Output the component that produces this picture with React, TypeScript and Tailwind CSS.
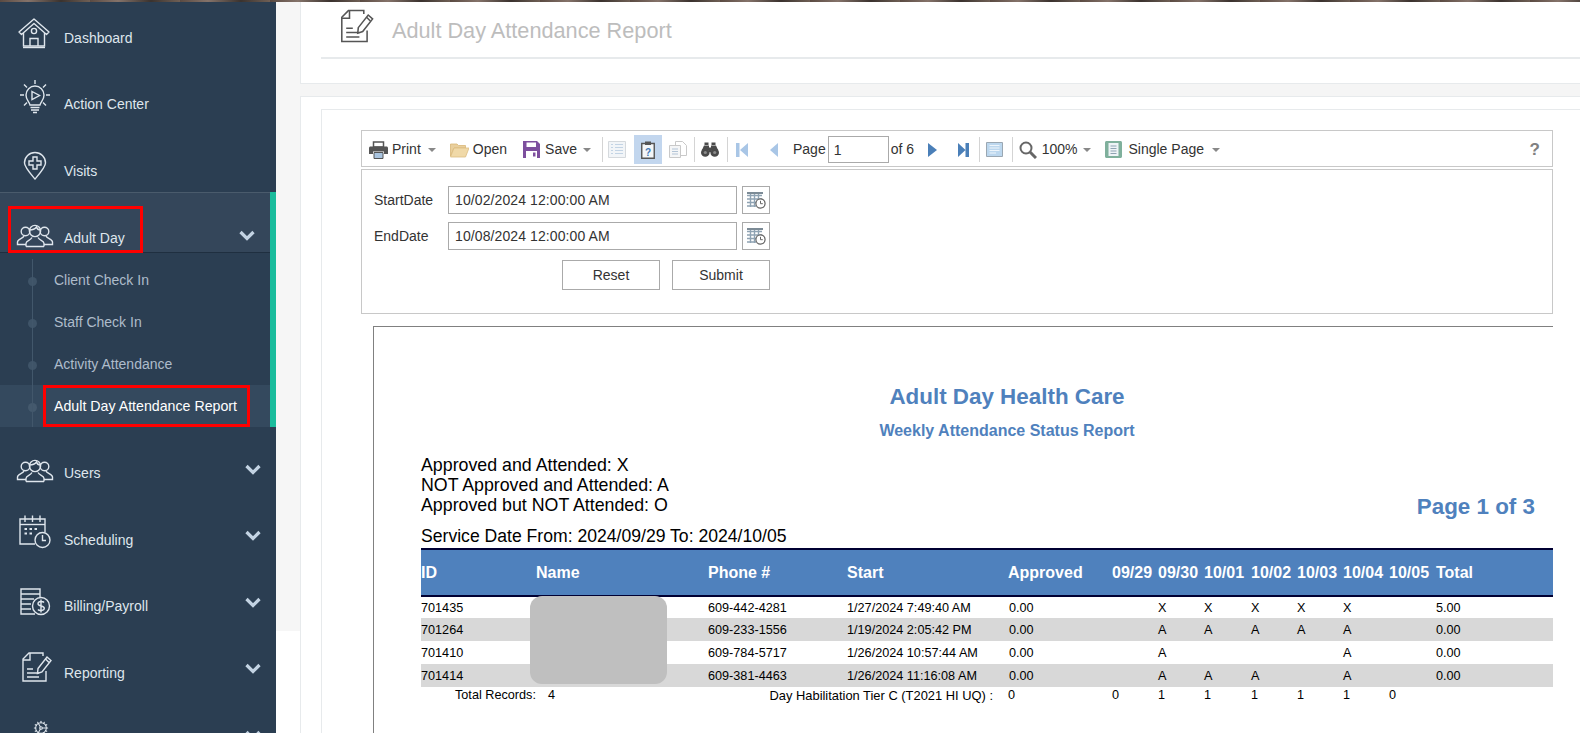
import { Cog } from "lucide-react";

type IconProps = { className?: string };

function HouseIcon({ className }: IconProps) {
  return (
    <svg viewBox="0 0 40 40" className={className} fill="none" stroke="currentColor" strokeWidth="1.4">
      <path d="M4 19 L19 6 L34 19 L31.5 21.5 L19 10.5 L6.5 21.5 Z" strokeLinejoin="round" />
      <path d="M8.5 20 V33 H29.5 V20" />
      <path d="M15 33 V25.5 H23 V33" />
      <circle cx="19" cy="18" r="2.6" />
      <path d="M8 34.5 H30" />
    </svg>
  );
}

function BulbIcon({ className }: IconProps) {
  return (
    <svg viewBox="0 0 40 40" className={className} fill="none" stroke="currentColor" strokeWidth="1.4">
      <path d="M15 28 C14 24 11 23 11 18 A9 9 0 0 1 29 18 C29 23 26 24 25 28 Z" />
      <path d="M17 14.5 L24.5 18.5 L17 22.5 Z" />
      <path d="M15.5 30.5 H24.5 M16 33 H24 M18 35.5 H22" />
      <path d="M20 3 V7 M5 18 H9 M31 18 H35 M9 7.5 L12 10.5 M31 7.5 L28 10.5 M9 28.5 L12 25.5 M31 28.5 L28 25.5" />
    </svg>
  );
}

function PinPlusIcon({ className }: IconProps) {
  return (
    <svg viewBox="0 0 40 40" className={className} fill="none" stroke="currentColor" strokeWidth="1.4">
      <path d="M20 33 C14 26 9.5 21 9.5 17 A10.5 10.5 0 0 1 30.5 17 C30.5 21 26 26 20 33 Z" />
      <path d="M18 11 H22 V15 H26 V19 H22 V23 H18 V19 H14 V15 H18 Z" />
    </svg>
  );
}

function PeopleIcon({ className }: IconProps) {
  return (
    <svg viewBox="0 0 40 40" className={className} fill="none" stroke="currentColor" strokeWidth="1.4">
      <circle cx="20" cy="15" r="5.6" />
      <path d="M14.5 14 C17 14 20 13 21.5 11 C22 13 24 14 25.5 14" />
      <circle cx="10.5" cy="15.5" r="4.3" />
      <circle cx="29.5" cy="15.5" r="4.3" />
      <path d="M11 30.5 V27.5 C11 24.5 15.5 24.5 17 21.5 M29 30.5 V27.5 C29 24.5 24.5 24.5 23 21.5 M11 30.5 H29" />
      <path d="M9 20 C8 22.5 2.5 23 2.5 26 V28.5 H11 M31 20 C32 22.5 37.5 23 37.5 26 V28.5 H29" />
    </svg>
  );
}

function CalendarClockIcon({ className }: IconProps) {
  return (
    <svg viewBox="0 0 40 40" className={className} fill="none" stroke="currentColor" strokeWidth="1.4">
      <path d="M20 32 H5 V7 H30 V20" />
      <path d="M5 12.5 H30" />
      <path d="M10 3.5 V10 M17.5 3.5 V10 M25 3.5 V10" />
      <path d="M9.5 17 H12 M14.5 17 H17 M19.5 17 H22 M9.5 21.5 H12 M14.5 21.5 H17" strokeWidth="2" />
      <circle cx="27.5" cy="28" r="7.5" />
      <path d="M27.5 23 V28.5 H31" />
    </svg>
  );
}

function BillingIcon({ className }: IconProps) {
  return (
    <svg viewBox="0 0 40 40" className={className} fill="none" stroke="currentColor" strokeWidth="1.4">
      <path d="M20 32 H6 V7 H25 V15" />
      <path d="M6 12 H25 M6 17 H19 M6 22 H16 M6 27 H16" />
      <circle cx="26" cy="24" r="8.5" />
      <path d="M29 20.5 C28 19 23 19 23 21.7 C23 24.6 29.3 23.4 29.3 26.3 C29.3 29 24 29 23 27.5 M26 17.5 V30.5" />
    </svg>
  );
}

function ReportIcon({ className }: IconProps) {
  return (
    <svg viewBox="0 0 40 40" className={className} fill="none" stroke="currentColor" strokeWidth="1.4">
      <path d="M31 24 V34 H8 V12 L14 6 H28 V9" />
      <path d="M8 13 H15 V6" />
      <path d="M12 22 H18 M12 26 H24 M12 30 H24" />
      <path d="M23 21.5 L32 10 L36 13.5 L27 25 L22.5 26.5 Z" />
      <path d="M30.5 12 L34 15.5" />
    </svg>
  );
}

function Chevron({ className }: IconProps) {
  return (
    <svg viewBox="0 0 16 11" className={className} fill="none" stroke="#c3d3e3" strokeWidth="3.2">
      <path d="M1.5 2 L8 8.5 L14.5 2" />
    </svg>
  );
}

function Caret() {
  return <span className="h-0 w-0 shrink-0 border-x-4 border-t-[4px] border-x-transparent border-t-[#888]" />;
}

function Sep() {
  return <span className="h-[25px] w-px shrink-0 bg-[#d4d4d4]" />;
}

function CalendarButton() {
  return (
    <button className="ml-[5px] flex h-[28px] w-[28px] items-center justify-center border border-[#aaa] bg-white">
      <svg viewBox="0 0 20 18" className="h-[18px] w-[20px]">
        <path d="M1 1 H17 V3 H1 Z" fill="#7c8b96" />
        <path d="M1 4.5 H16 M1 8 H16 M1 11.5 H12 M1 15 H10 M4.5 3 V16 M8.5 3 V16 M12.5 3 V10" stroke="#8fa3b3" strokeWidth="1.4" />
        <circle cx="14.5" cy="12.5" r="4.6" fill="#fff" stroke="#666" strokeWidth="1.2" />
        <path d="M14.5 9.8 V12.7 H16.8" fill="none" stroke="#666" />
      </svg>
    </button>
  );
}

const topItems = [
  { label: "Dashboard", Icon: HouseIcon, iconTop: "mt-[21px]", textTop: "mt-[36px]" },
  { label: "Action Center", Icon: BulbIcon, iconTop: "mt-[18px]", textTop: "mt-[35px]" },
  { label: "Visits", Icon: PinPlusIcon, iconTop: "mt-[21px]", textTop: "mt-[36px]" },
];

const bottomItems = [
  { label: "Users", Icon: PeopleIcon, iconTop: "mt-[24px]", textTop: "mt-[36px]" },
  { label: "Scheduling", Icon: CalendarClockIcon, iconTop: "mt-[19px]", textTop: "mt-[37px]" },
  { label: "Billing/Payroll", Icon: BillingIcon, iconTop: "mt-[22px]", textTop: "mt-[36px]" },
  { label: "Reporting", Icon: ReportIcon, iconTop: "mt-[21px]", textTop: "mt-[37px]" },
];

const subItems = ["Client Check In", "Staff Check In", "Activity Attendance"];

function Sidebar() {
  return (
    <aside className="w-[276px] shrink-0 overflow-hidden bg-[#2b3e52] text-[14px] text-[#dfe6ed]">
      <div className="-mt-[10px]">
        {topItems.map(({ label, Icon, iconTop, textTop }) => (
          <div key={label} className="flex h-[66.5px] items-start">
            <Icon className={`ml-[15px] h-[40px] w-[40px] shrink-0 ${iconTop}`} />
            <span className={`ml-[9px] leading-[20px] ${textTop}`}>{label}</span>
          </div>
        ))}

        <div className="border-r-[6px] border-[#1abc9c]">
          <div className="relative flex h-[61px] items-start border-y border-t-[#4a5b6c] border-b-[#1f2f40] bg-[#34465a]">
            <PeopleIcon className="ml-[15px] mt-[23px] h-[40px] w-[40px] shrink-0" />
            <span className="ml-[9px] mt-[35px] leading-[20px]">Adult Day</span>
            <Chevron className="ml-auto mr-[15px] mt-[37px] h-[11px] w-[16px]" />
            <div className="absolute left-[8px] top-[13px] z-10 h-[47px] w-[135px] border-[3px] border-[#f00]" />
          </div>
          <div className="relative pt-[6px] text-[#aebccb]">
            {subItems.map((label) => (
              <div key={label} className="relative flex h-[42px] items-center pl-[54px] pt-[2px]">
                <span className="absolute left-[28px] top-[18px] h-[9px] w-[9px] rounded-full bg-[#3f5468]" />
                {label}
              </div>
            ))}
            <div className="relative flex h-[42px] items-center bg-[#34495e] pl-[54px] pt-[2px] text-[14.2px] text-white">
              <span className="absolute left-[28px] top-[18px] h-[9px] w-[9px] rounded-full bg-[#44596d]" />
              Adult Day Attendance Report
              <div className="absolute left-[43px] top-0 z-10 h-[42px] w-[207px] border-[3px] border-[#f00]" />
            </div>
            <div className="absolute bottom-0 left-[32px] top-[6px] w-px bg-[#42576b]" />
          </div>
        </div>

        {bottomItems.map(({ label, Icon, iconTop, textTop }) => (
          <div key={label} className="flex h-[66.5px] items-start">
            <Icon className={`ml-[15px] h-[40px] w-[40px] shrink-0 ${iconTop}`} />
            <span className={`ml-[9px] leading-[20px] ${textTop}`}>{label}</span>
            <Chevron className="ml-auto mr-[15px] mt-[37px] h-[11px] w-[16px]" />
          </div>
        ))}

        <div className="flex items-start">
          <Cog className="ml-[33px] mt-[27px] h-[16px] w-[16px] shrink-0" strokeWidth={1.6} />
          <Chevron className="ml-auto mr-[15px] mt-[37px] h-[11px] w-[16px]" />
        </div>
      </div>
    </aside>
  );
}

function Toolbar() {
  return (
    <div className="flex h-[37px] items-center border border-[#c8c8c8] bg-white pt-[2px] text-[14px] text-[#333]">
      <svg viewBox="0 0 19 18" className="ml-[7px] h-[18px] w-[19px] shrink-0">
        <path d="M4.5 1 H14.5 V6 H4.5 Z" fill="#fff" stroke="#555" strokeWidth="1.5" />
        <path d="M1.5 5.5 H17.5 C18.3 5.5 19 6.2 19 7 V13 H15 V10.5 H4 V13 H0 V7 C0 6.2 0.7 5.5 1.5 5.5 Z" fill="#555" />
        <path d="M5 11.5 H14 V17.5 H5 Z" fill="#a9c4df" stroke="#555" />
      </svg>
      <span className="ml-[4px]">Print</span>
      <span className="ml-[7px] flex"><Caret /></span>
      <svg viewBox="0 0 19 16" className="ml-[14px] h-[16px] w-[19px] shrink-0">
        <path d="M0.5 2 H7 L8.5 3.5 H15.5 V6 H4 L0.5 14 Z" fill="#e9cf9d" stroke="#d9b777" strokeWidth="0.8" />
        <path d="M4 6 H19 L15.5 15 H0.5 Z" fill="#f0d9a8" stroke="#dcbc80" strokeWidth="0.8" />
      </svg>
      <span className="ml-[4px]">Open</span>
      <svg viewBox="0 0 17 17" className="ml-[16px] h-[17px] w-[17px] shrink-0">
        <path d="M0 0 H14 L17 3 V17 H0 Z" fill="#7d4f9e" />
        <path d="M3.5 1.5 H13 V6 H3.5 Z" fill="#fff" />
        <path d="M3 10 H14 V17 H3 Z" fill="#fff" />
        <path d="M10 11.5 H12.5 V15.5 H10 Z" fill="#7d4f9e" />
      </svg>
      <span className="ml-[5px]">Save</span>
      <span className="ml-[6px] flex"><Caret /></span>
      <span className="ml-[11px] flex"><Sep /></span>
      <svg viewBox="0 0 18 17" className="ml-[5px] h-[17px] w-[18px] shrink-0">
        <path d="M0.5 0.5 H17.5 V16.5 H0.5 Z" fill="#f2f5f8" stroke="#d5d9dd" />
        <path d="M3 3.5 H5 M7 3.5 H15 M3 6.5 H5 M7 6.5 H15 M3 9.5 H5 M7 9.5 H15 M3 12.5 H5 M7 12.5 H15" stroke="#c3d4e5" strokeWidth="1.2" />
      </svg>
      <span className="ml-[8px] flex h-[29px] w-[28px] shrink-0 items-center justify-center bg-[#c2d6ee]">
        <svg viewBox="0 0 14 18" className="h-[18px] w-[14px]">
          <path d="M0.75 2.5 H13.25 V17.25 H0.75 Z" fill="#f4f6f8" stroke="#555" strokeWidth="1.4" />
          <path d="M4 0.5 H10 V4 H4 Z" fill="#555" />
          <text x="7" y="14.5" textAnchor="middle" fontSize="10" fontWeight="700" fill="#3f78b5" fontFamily="Liberation Sans, sans-serif">?</text>
        </svg>
      </span>
      <svg viewBox="0 0 18 17" className="ml-[7px] h-[17px] w-[18px] shrink-0">
        <path d="M6.5 0.5 H13.5 L17.5 4.5 V14.5 H6.5 Z" fill="#fff" stroke="#c9c9c9" />
        <path d="M0.5 4.5 H11.5 V16.5 H0.5 Z" fill="#f5f6f7" stroke="#c9c9c9" />
        <path d="M3 8 H9 M3 10.5 H9 M3 13 H9" stroke="#b3c4d6" />
      </svg>
      <span className="ml-[7px] flex"><Sep /></span>
      <svg viewBox="0 0 18 15" className="ml-[6px] h-[15px] w-[18px] shrink-0" fill="#4a4a4a">
        <path d="M3.5 0.5 H7.5 V3 H3.5 Z M10.5 0.5 H14.5 V3 H10.5 Z" />
        <path d="M3 3.5 H8 V5.5 H10 V3.5 H15 L17 8 H1 Z" />
        <circle cx="4.3" cy="10.5" r="4.3" />
        <circle cx="13.7" cy="10.5" r="4.3" />
        <path d="M7.5 6 H10.5 V10 H7.5 Z" />
        <circle cx="4.3" cy="10.5" r="1.6" fill="#8a8a8a" />
        <circle cx="13.7" cy="10.5" r="1.6" fill="#8a8a8a" />
      </svg>
      <span className="ml-[8px] flex"><Sep /></span>
      <svg viewBox="0 0 12 14" className="ml-[8px] h-[14px] w-[12px] shrink-0">
        <path d="M0 0 H3.5 V14 H0 Z M12 0 V14 L4 7 Z" fill="#a9c6e6" />
      </svg>
      <svg viewBox="0 0 8 14" className="ml-[22px] h-[14px] w-[8px] shrink-0">
        <path d="M8 0 V14 L0 7 Z" fill="#a9c6e6" />
      </svg>
      <span className="ml-[15px]">Page</span>
      <input
        readOnly
        value="1"
        className="ml-[2px] h-[27px] w-[61px] shrink-0 border border-[#aaa] bg-white px-[5px] text-[14px] text-[#333]"
      />
      <span className="ml-[2px] w-[24px] shrink-0 whitespace-nowrap">of 6</span>
      <svg viewBox="0 0 9 14" className="ml-[13px] h-[14px] w-[9px] shrink-0">
        <path d="M0 0 V14 L9 7 Z" fill="#4a7fb8" />
      </svg>
      <svg viewBox="0 0 11 14" className="ml-[21px] h-[14px] w-[11px] shrink-0">
        <path d="M0 0 L7.5 7 L0 14 Z M7.5 0 H11 V14 H7.5 Z" fill="#4a7fb8" />
      </svg>
      <span className="ml-[10px] flex"><Sep /></span>
      <svg viewBox="0 0 17 15" className="ml-[6px] h-[15px] w-[17px] shrink-0">
        <path d="M0.5 0.5 H16.5 V14.5 H0.5 Z" fill="#bcd7ee" stroke="#9aa7b2" />
        <path d="M3.5 3.5 H13.5 M3.5 6 H13.5 M3.5 8.5 H13.5 M3.5 11 H10" stroke="#eef5fb" />
      </svg>
      <span className="ml-[9px] flex"><Sep /></span>
      <svg viewBox="0 0 18 18" className="ml-[6px] h-[18px] w-[18px] shrink-0" fill="none" stroke="#666">
        <circle cx="7" cy="7" r="5.5" strokeWidth="2" />
        <path d="M11 11 L17 17" strokeWidth="3" />
      </svg>
      <span className="ml-[5px]">100%</span>
      <span className="ml-[6px] flex"><Caret /></span>
      <svg viewBox="0 0 17 17" className="ml-[14px] h-[17px] w-[17px] shrink-0">
        <path d="M1.5 0 H15.5 C16.3 0 17 0.7 17 1.5 V15.5 C17 16.3 16.3 17 15.5 17 H1.5 C0.7 17 0 16.3 0 15.5 V1.5 C0 0.7 0.7 0 1.5 0 Z" fill="#7fb09c" />
        <path d="M3.5 2 H13.5 V15 H3.5 Z" fill="#eef3f6" />
        <path d="M5.5 5 H11.5 M5.5 7.5 H11.5 M5.5 10 H11.5 M5.5 12.5 H11.5" stroke="#8fa3b3" />
      </svg>
      <span className="ml-[6px]">Single Page</span>
      <span className="ml-[8px] flex"><Caret /></span>
      <span className="ml-auto mr-[12px] text-[17px] font-bold leading-none text-[#808080]">?</span>
    </div>
  );
}

function Params() {
  return (
    <div className="mt-[2px] h-[145px] border border-[#c8c8c8] pl-[12px] pt-[16px] text-[14px] text-[#333]">
      <div className="flex items-center">
        <span className="w-[74px]">StartDate</span>
        <input readOnly value="10/02/2024 12:00:00 AM" className="h-[28px] w-[289px] border border-[#aaa] px-[6px] tracking-[0.1px]" />
        <CalendarButton />
      </div>
      <div className="mt-[8px] flex items-center">
        <span className="w-[74px]">EndDate</span>
        <input readOnly value="10/08/2024 12:00:00 AM" className="h-[28px] w-[289px] border border-[#aaa] px-[6px] tracking-[0.1px]" />
        <CalendarButton />
      </div>
      <div className="mt-[10px] flex pl-[188px]">
        <button className="h-[30px] w-[98px] border border-[#aaa] bg-white">Reset</button>
        <button className="ml-[12px] h-[30px] w-[98px] border border-[#aaa] bg-white">Submit</button>
      </div>
    </div>
  );
}

const gridCols = "grid grid-cols-[115px_172px_139px_161px_104px_46px_46px_47px_46px_46px_46px_47px_1fr]";
const headers = ["ID", "Name", "Phone #", "Start", "Approved", "09/29", "09/30", "10/01", "10/02", "10/03", "10/04", "10/05", "Total"];

const rows = [
  { id: "701435", phone: "609-442-4281", start: "1/27/2024 7:49:40 AM", days: ["", "X", "X", "X", "X", "X", ""], total: "5.00", cls: "h-[21px]" },
  { id: "701264", phone: "609-233-1556", start: "1/19/2024 2:05:42 PM", days: ["", "A", "A", "A", "A", "A", ""], total: "0.00", cls: "h-[23px] bg-[#d8d8d8]" },
  { id: "701410", phone: "609-784-5717", start: "1/26/2024 10:57:44 AM", days: ["", "A", "", "", "", "A", ""], total: "0.00", cls: "h-[23px]" },
  { id: "701414", phone: "609-381-4463", start: "1/26/2024 11:16:08 AM", days: ["", "A", "A", "A", "", "A", ""], total: "0.00", cls: "h-[23px] bg-[#d8d8d8]" },
];

const totals = ["0", "1", "1", "1", "1", "1", "0"];

function ReportTable() {
  return (
    <div className="relative mt-[2px] text-[12.67px] text-black">
      <div className={`${gridCols} h-[49px] items-center border-y-2 border-[#000033] bg-[#4f81bd] text-[16px] font-bold text-white`}>
        {headers.map((h) => (
          <span key={h} className="whitespace-nowrap">{h}</span>
        ))}
      </div>
      {rows.map((r) => (
        <div key={r.id} className={`${gridCols} items-center pt-[1px] ${r.cls}`}>
          <span>{r.id}</span>
          <span />
          <span>{r.phone}</span>
          <span>{r.start}</span>
          <span className="pl-[1px]">0.00</span>
          {r.days.map((d, i) => (
            <span key={i}>{d}</span>
          ))}
          <span>{r.total}</span>
        </div>
      ))}
      <div className={`${gridCols} -mt-[1px] h-[13px] items-center`}>
        <span className="whitespace-nowrap pl-[34px]">Total Records:</span>
        <span className="pl-[12px]">4</span>
        <span className="col-span-2 whitespace-nowrap pr-[15px] text-right text-[12.9px]">Day Habilitation Tier C (T2021 HI UQ) :</span>
        <span>0</span>
        {totals.map((t, i) => (
          <span key={i}>{t}</span>
        ))}
      </div>
      <div className="absolute left-[109px] top-[48px] h-[88px] w-[137px] rounded-[12px] bg-[#bfbfbf]" />
    </div>
  );
}

function Report() {
  return (
    <div className="ml-[12px] mt-[12px] flex-1 overflow-hidden border-l border-t border-[#808080] pl-[47px] pt-[57px]">
      <div className="pl-[40px] text-center text-[22.4px] font-bold leading-[26px] text-[#4f81bd]">Adult Day Health Care</div>
      <div className="mt-[11px] pl-[40px] text-center text-[16px] font-bold leading-[20px] text-[#4f81bd]">Weekly Attendance Status Report</div>
      <div className="mt-[14px] flex justify-between text-[17.8px] leading-[20px] text-black">
        <div>
          <div>Approved and Attended: X</div>
          <div>NOT Approved and Attended: A</div>
          <div>Approved but NOT Attended: O</div>
          <div className="mt-[11px] text-[17.6px]">Service Date From: 2024/09/29 To: 2024/10/05</div>
        </div>
        <div className="mr-[18px] mt-[39px] text-[22.4px] font-bold leading-[26px] text-[#4f81bd]">Page 1 of 3</div>
      </div>
      <ReportTable />
    </div>
  );
}

export default function App() {
  return (
    <div className="flex h-[733px] w-[1580px] flex-col overflow-hidden bg-white font-['Liberation_Sans',Arial,sans-serif]">
      <div className="h-[2px] shrink-0 bg-[repeating-linear-gradient(90deg,#5a4a42_0px,#85736a_28px,#3a322e_61px,#6f5f55_90px)]" />
      <div className="flex min-h-0 flex-1">
        <Sidebar />
        <div className="h-[629px] w-[24px] shrink-0 bg-[#f6f6f6]" />
        <main className="flex min-w-0 flex-1 flex-col">
          <div className="h-[82px] shrink-0 border-b border-l border-[#e7eaec]">
            <div className="ml-[20px] flex h-[57px] items-center border-b-2 border-[#e7eaec] pl-[12px]">
              <ReportIcon className="-mt-[8px] h-[44px] w-[44px] shrink-0 text-[#555]" />
              <span className="ml-[15px] pt-[3px] text-[21.7px] text-[#bdbdbd]">Adult Day Attendance Report</span>
            </div>
          </div>
          <div className="h-[12px] shrink-0 bg-[#f5f5f5]" />
          <div className="flex min-h-0 flex-1 flex-col border-l border-t border-[#e7eaec] pl-[20px] pt-[12px]">
            <div className="flex min-h-0 flex-1 flex-col border-l border-t border-[#e7eaec] pl-[39px] pr-[27px] pt-[20px]">
              <Toolbar />
              <Params />
              <Report />
            </div>
          </div>
        </main>
      </div>
    </div>
  );
}
